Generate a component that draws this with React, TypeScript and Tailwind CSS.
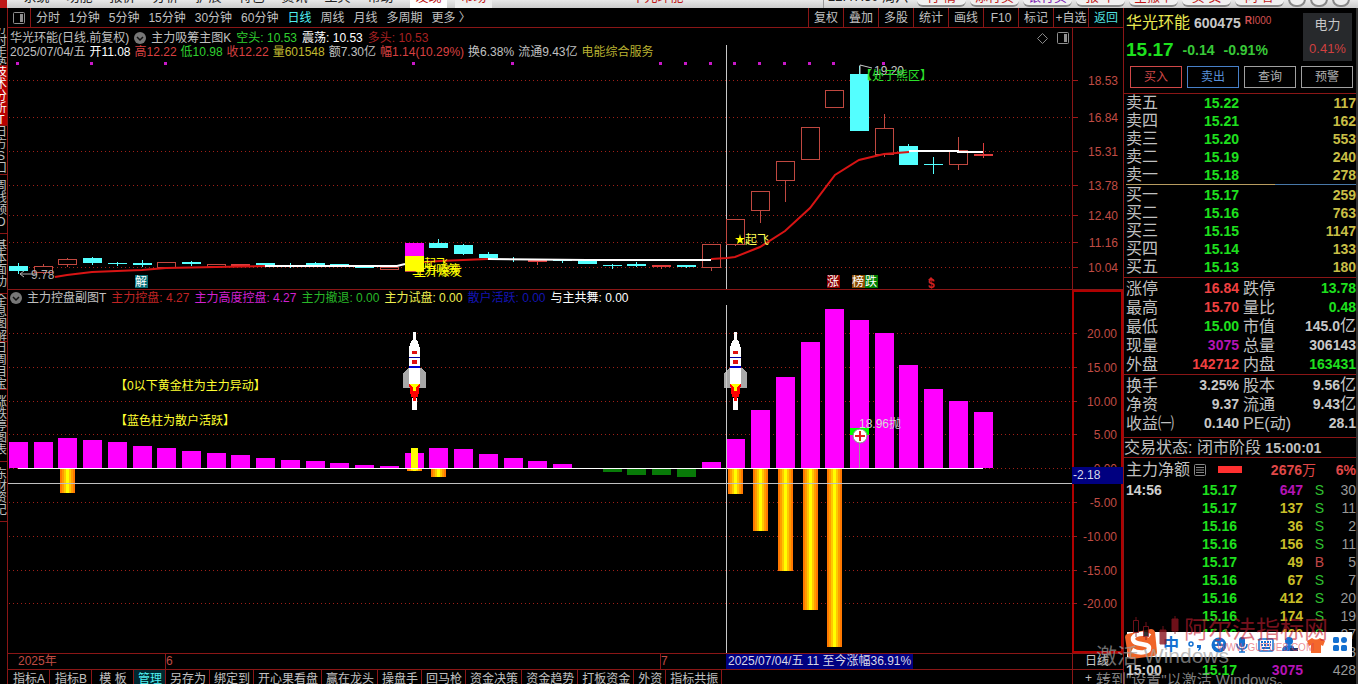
import { useState } from "react";
import clsx from "clsx";

type Candle = {
  body: [number, number];
  wick?: [number, number];
  kind: "up" | "down" | "flat";
};

const menus = ["系统", "功能", "报价", "分析", "扩展", "特色", "资讯", "工具", "帮助"];
const pills = ["行 情", "添行买", "银行买", "报 单", "全撤单", "买 卖", "问 答"];
const periods = ["分时", "1分钟", "5分钟", "15分钟", "30分钟", "60分钟", "日线", "周线", "月线", "多周期", "更多 〉"];
const tools = ["复权", "叠加", "多股", "统计", "画线", "F10", "标记", "+自选", "返回"];
const bottomTabs = [
  "指标A", "指标B", "模 板", "管理", "另存为", "绑定到", "开心果看盘", "赢在龙头",
  "操盘手", "回马枪", "资金决策", "资金趋势", "打板资金", "外资", "指标共振",
];
const sideTabs = [
  { label: "分时走势", height: "h-[38px]" },
  { label: "技术分析T", height: "h-[60px]" },
  { label: "日方S口", height: "h-[49px]" },
  { label: "周线预O", height: "h-[59px]" },
  { label: "基本面功", height: "h-[60px]" },
  { label: "全息图解", height: "h-[48px]" },
  { label: "日周目宝", height: "h-[48px]" },
  { label: "涨跌停图表", height: "h-[72px]" },
  { label: "东财资记", height: "h-[60px]" },
];

const asks = [
  ["卖五", "15.22", "117"],
  ["卖四", "15.21", "162"],
  ["卖三", "15.20", "553"],
  ["卖二", "15.19", "240"],
  ["卖一", "15.18", "278"],
];
const bids = [
  ["买一", "15.17", "259"],
  ["买二", "15.16", "763"],
  ["买三", "15.15", "1147"],
  ["买四", "15.14", "133"],
  ["买五", "15.13", "180"],
];

const RED = "text-[#f04040]";
const GREEN = "text-[#1ee01e]";
const GRAY = "text-[#c8c8c8]";
const PURPLE = "text-[#b414b4]";

const stats = [
  ["涨停", "16.84", RED, "跌停", "13.78", GREEN],
  ["最高", "15.70", RED, "量比", "0.48", GREEN],
  ["最低", "15.00", GREEN, "市值", "145.0亿", GRAY],
  ["现量", "3075", PURPLE, "总量", "306143", GRAY],
  ["外盘", "142712", RED, "内盘", "163431", GREEN],
];
const basics = [
  ["换手", "3.25%", GRAY, "股本", "9.56亿", GRAY],
  ["净资", "9.37", GRAY, "流通", "9.43亿", GRAY],
  ["收益㈠", "0.140", GRAY, "PE(动)", "28.1", GRAY],
];
const ticks = [
  ["14:56", "15.17", "647", "S", "30"],
  ["", "15.17", "137", "S", "11"],
  ["", "15.16", "36", "S", "2"],
  ["", "15.16", "156", "S", "11"],
  ["", "15.17", "49", "B", "5"],
  ["", "15.16", "67", "S", "7"],
  ["", "15.16", "412", "S", "20"],
  ["", "15.16", "174", "S", "19"],
  ["", "15.16", "460", "S", "27"],
  ["", "15.16", "85", "S", "8"],
  ["15:00", "15.17", "3075", "", "428"],
];

// y values are measured from the top of the price pane
const candles: Candle[] = [
  { body: [238, 243], wick: [235, 246], kind: "down" },
  { body: [238, 244], wick: [236, 246], kind: "up" },
  { body: [231, 236], wick: [230, 239], kind: "up" },
  { body: [230, 235], wick: [229, 237], kind: "down" },
  { body: [235, 236], wick: [234, 238], kind: "down" },
  { body: [235, 237], wick: [232, 239], kind: "down" },
  { body: [234, 239], kind: "up" },
  { body: [234, 236], wick: [233, 238], kind: "down" },
  { body: [236, 238], kind: "up" },
  { body: [236, 238], kind: "flat" },
  { body: [235, 237], kind: "down" },
  { body: [237, 238], wick: [235, 240], kind: "down" },
  { body: [235, 237], wick: [234, 239], kind: "down" },
  { body: [236, 237], kind: "down" },
  { body: [239, 240], kind: "down" },
  { body: [239, 241], kind: "up" },
  { body: [215, 243], kind: "up" },
  { body: [215, 220], wick: [211, 220], kind: "down" },
  { body: [217, 226], wick: [216, 227], kind: "down" },
  { body: [226, 230], wick: [224, 230], kind: "down" },
  { body: [231, 232], wick: [229, 234], kind: "down" },
  { body: [232, 234], wick: [232, 237], kind: "flat" },
  { body: [232, 233], wick: [232, 235], kind: "down" },
  { body: [232, 236], kind: "down" },
  { body: [237, 238], wick: [236, 241], kind: "down" },
  { body: [236, 238], wick: [234, 239], kind: "down" },
  { body: [237, 239], wick: [237, 241], kind: "flat" },
  { body: [237, 239], wick: [237, 240], kind: "down" },
  { body: [216, 239], wick: [239, 243], kind: "up" },
  { body: [191, 216], wick: [216, 218], kind: "up" },
  { body: [163, 182], wick: [182, 195], kind: "up" },
  { body: [133, 152], wick: [152, 174], kind: "up" },
  { body: [99, 131], kind: "up" },
  { body: [62, 79], kind: "up" },
  { body: [46, 103], wick: [38, 46], kind: "down" },
  { body: [100, 126], wick: [86, 129], kind: "up" },
  { body: [118, 137], wick: [116, 118], kind: "down" },
  { body: [136, 137], wick: [129, 146], kind: "down" },
  { body: [122, 136], wick: [109, 142], kind: "up" },
  { body: [126, 128], wick: [115, 130], kind: "flat" },
];

const signalDays = [0, 3, 6, 16, 20, 26, 27, 28, 29, 30, 31, 32, 33, 35];

// pixel heights above the zero line, negative ones hang below it
const control = [
  26, 26, 30, 28, 26, 22, 20, 17, 15, 13, 10, 8, 7, 5, 3, 2, 15, 20, 19, 14,
  10, 7, 4, 0, -4, -7, -7, -9, 6, 29, 58, 91, 126, 159, 148, 135, 103, 79, 67, 56,
];
const gold: [number, number][] = [
  [2, 25], [16, 3], [17, 9], [29, 26], [30, 63], [31, 103], [32, 142], [33, 179],
];

const priceAxis: [number, string][] = [
  [52, "18.53"], [89, "16.84"], [123, "15.31"], [157, "13.78"],
  [187, "12.40"], [214, "11.16"], [239, "10.04"],
];
const controlAxis: [number, string][] = [
  [43, "20.00"], [77, "15.00"], [111, "10.00"], [144, "5.00"], [178, "0.00"],
  [212, "-5.00"], [246, "-10.00"], [280, "-15.00"], [313, "-20.00"],
];

const ZERO = 178;
const dayX = (i: number) => Math.floor(10.33 + i * 24.74);

const GridLines = ({ rows }: { rows: number[] }) => (
  <>
    {rows.map((y) => (
      <line key={y} x1="1" x2="100%" y1={y + 0.5} y2={y + 0.5} stroke="#a02018" strokeDasharray="1 3" />
    ))}
  </>
);

const PanelIcon = () => (
  <svg width="14" height="12" viewBox="0 0 14 12" fill="none" aria-hidden="true">
    <rect x="1.5" y="0.5" width="11" height="11" rx="1" stroke="#909090" />
    <rect x="8" y="2" width="3" height="8" fill="#909090" />
  </svg>
);

const Chevron = () => (
  <svg width="12" height="12" viewBox="0 0 12 12" aria-hidden="true">
    <circle cx="6" cy="6" r="6" fill="#777" />
    <path d="M3 5l3 3 3-3" fill="none" stroke="#111" strokeWidth="1.5" />
  </svg>
);

const Badge = ({ x, fill, text }: { x: number; fill: string; text: string }) => (
  <g>
    <rect x={x} y="247" width="13" height="13" fill={fill} />
    <text x={x} y="258" fontSize="12" fill="#fff">{text}</text>
  </g>
);

const Rocket = ({ x }: { x: number }) => (
  <g transform={`translate(${x} 42)`} shapeRendering="crispEdges">
    <path d="M-6 36 -11 41V56H12V41L7 36z" fill="#a8a8a8" />
    <path d="M-1 0H2V7L4 10 6 16V52H-5V16L-3 10-1 7z" fill="#fff" />
    <rect x="-2" y="19" width="5" height="3" fill="#e01010" />
    <rect x="-5" y="25" width="11" height="1" fill="#0000a0" />
    <rect x="-2" y="28" width="5" height="4" fill="#e01010" />
    <rect x="-5" y="34" width="11" height="2" fill="#0000d0" />
    <rect x="-2" y="66" width="5" height="12" fill="#fff" />
    <path d="M-5 52H6L4 65H2V69H-1V65H-3z" fill="#f00" />
    <path d="M-4 52H5L2 56V59H-1V56z" fill="#ff0" />
  </g>
);

const PriceChart = () => (
  <svg className="block h-[261px] w-full" role="img" aria-label="日线">
    <GridLines rows={priceAxis.map(([y]) => y)} />
    <line x1="718.5" x2="718.5" y1="17" y2="261" stroke="#c8c8c8" />
    <g shapeRendering="crispEdges">
      {signalDays.map((d) => (
        <rect key={d} x={dayX(d) - 2} y="34" width="3" height="3" fill="#c818c8" />
      ))}
      {candles.map(({ body, wick, kind }, i) => {
        const x = dayX(i);
        const color = kind === "down" ? "#54ffff" : kind === "up" ? "#c04840" : "#e03c3c";
        return (
          <g key={i}>
            {wick && <rect x={x} y={wick[0]} width="1" height={wick[1] - wick[0]} fill={color} />}
            {kind === "up" ? (
              <rect x={x - 8.5} y={body[0] + 0.5} width="18" height={body[1] - body[0]} fill="#000" stroke={color} />
            ) : (
              <rect x={x - 9} y={body[0]} width="19" height={body[1] - body[0]} fill={color} />
            )}
          </g>
        );
      })}
      <rect x="397" y="215" width="19" height="13" fill="#f0f" />
      <rect x="397" y="228" width="19" height="15" fill="#ff0" />
    </g>
    <g fill="none" strokeWidth="2">
      <path d="M47 249 59 247 84 244 134 242 158 240 208 239 257 238M416 234 432 233 455 232 480 231M703 231 719 230 727 229 752 219 777 203 802 180 827 147 851 132 876 126 901 124" stroke="#d81414" />
      <path d="M257 238H389L397 236M480 231 579 232H703M901 123H950V124H975" stroke="#fff" />
    </g>
    <g fontSize="12">
      <path d="M29 246H12M12 246l4-3M12 246l4 3" stroke="#b0b0b0" fill="none" />
      <text x="23" y="251" fill="#b0b0b0">9.78</text>
      <text x="416" y="240" fill="#ff0">起飞</text>
      <text x="404" y="246" fill="#ff0">主力吸筹</text>
      <text x="406" y="248" fill="#ff0">主升爆发</text>
      <path d="M732 206 733 210H737L734 212 735 216 732 214 729 216 730 212 727 210H731z" fill="#ff0" />
      <text x="737" y="216" fill="#ff5">起飞</text>
      <path d="M852 46V37l12 3" stroke="#c8c8c8" fill="none" />
      <text x="866" y="47" fill="#c8c8c8">19.20</text>
      <text x="852" y="52" fill="#2be02b">【处于熊区】</text>
      <Badge x={127} fill="#08707a" text="解" />
      <Badge x={819} fill="#8a0000" text="涨" />
      <Badge x={844} fill="#8a4a00" text="榜" />
      <Badge x={857} fill="#008000" text="跌" />
      <text x="920" y="260" fill="#d02020" fontWeight="bold">$</text>
      <path d="M920 252l3-3 3 3z" fill="#d02020" />
    </g>
  </svg>
);

const ControlChart = () => (
  <svg className="block h-[363px] w-full" role="img" aria-label="主力控盘">
    <GridLines rows={controlAxis.map(([y]) => y)} />
    <g shapeRendering="crispEdges">
      {control.map((v, i) => (
        <rect
          key={i}
          x={dayX(i) - 9}
          y={v > 0 ? ZERO - v : ZERO}
          width="19"
          height={Math.abs(v)}
          fill={v > 0 ? "#f0f" : "#087a08"}
        />
      ))}
      {gold.map(([i, h]) => (
        <g key={i}>
          <rect x={dayX(i) - 7} y={ZERO} width="15" height={h} fill="#ff7800" />
          <rect x={dayX(i) - 5} y={ZERO} width="11" height={h} fill="#ff9c00" />
          <rect x={dayX(i) - 3} y={ZERO} width="7" height={h} fill="#ffc800" />
          <rect x={dayX(i) - 1} y={ZERO} width="3" height={h} fill="#ff0" />
        </g>
      ))}
      <rect x="403" y="158" width="7" height="22" fill="#ff0" />
      <rect x="10" y={ZERO} width="965" height="1" fill="#fff" />
      <rect x="0" y="193" width="100%" height="1" fill="#c0c0c0" />
      <rect x="842" y="138" width="19" height="7" fill="#0f0" />
      <rect x="851" y="150" width="1" height="28" fill="#999" />
    </g>
    <Rocket x={406} />
    <Rocket x={727} />
    <line x1="718.5" x2="718.5" y1="15" y2="363" stroke="#c8c8c8" />
    <circle cx="852" cy="146" r="7" fill="#fff" stroke="#888" />
    <path d="M847 146h10M852 141v10" stroke="#e02020" strokeWidth="2" />
    <g fontSize="12">
      <text x="851" y="138" fill="#d8d8d8">18.96抛</text>
      <text x="107" y="100" fill="#ffff30">【0以下黄金柱为主力异动】</text>
      <text x="107" y="135" fill="#ffff30">【蓝色柱为散户活跃】</text>
    </g>
  </svg>
);

const Axis = ({ rows, className }: { rows: [number, string][]; className: string }) => (
  <svg className={clsx("block w-full", className)} aria-hidden="true">
    {rows.map(([y, label]) => (
      <g key={label}>
        <line x1="0" x2="5" y1={y + 0.5} y2={y + 0.5} stroke="#a01818" />
        <text x="45" y={y + 5} fontSize="12" textAnchor="end" fill="#c04c44">{label}</text>
      </g>
    ))}
  </svg>
);

const Level = ({ row }: { row: string[] }) => (
  <tr className="h-[18px]">
    <th className="w-[50px] text-left font-normal text-base leading-[18px] text-[#c0c0c0]">{row[0]}</th>
    <td className={clsx("w-[63px] text-right", GREEN)}>{row[1]}</td>
    <td className="text-right text-[#c8be46]">{row[2]}</td>
  </tr>
);

const StatTable = ({ rows }: { rows: string[][] }) => (
  <table className="w-full table-fixed text-sm font-bold leading-[19px]">
    <tbody>
      {rows.map((r) => (
        <tr key={r[0]} className="h-[19px]">
          <th className="w-[52px] whitespace-nowrap text-left font-normal text-base leading-[19px] text-[#c0c0c0]">{r[0]}</th>
          <td className={clsx("w-[61px] text-right", r[2])}>{r[1]}</td>
          <th className="w-[50px] whitespace-nowrap pl-1 text-left font-normal text-base leading-[19px] text-[#c0c0c0]">{r[3]}</th>
          <td className={clsx("whitespace-nowrap text-right", r[5])}>
            {r[4].replace("亿", "")}
            {r[4].endsWith("亿") && <span className="text-base font-normal leading-none">亿</span>}
          </td>
        </tr>
      ))}
    </tbody>
  </table>
);

const ImeBar = () => (
  <div className="absolute left-[3px] top-[624px] flex h-[25px] w-[225px] items-center bg-white pl-9 pr-1 text-[#1470d0]">
    <svg className="absolute -left-1 -top-1 h-8 w-9" viewBox="0 0 36 32" aria-hidden="true">
      <path d="M4 6 28 1q3 0 4 3l2 20q0 3-3 4L9 31q-3 0-4-3L2 9q0-2 2-3z" fill="#f06428" />
      <path d="M27 8C21 4 10 6 10 11c0 7 16 3 16 9 0 5-10 6-17 2" fill="none" stroke="#fff" strokeWidth="4.5" />
    </svg>
    <div className="flex flex-1 items-center justify-between">
      <span className="text-base font-bold leading-6">中</span>
      <svg width="16" height="16" viewBox="0 0 16 16" fill="currentColor" aria-hidden="true">
        <circle cx="4" cy="7" r="2" fill="none" stroke="currentColor" strokeWidth="1.5" />
        <path d="M10 8h4v3q0 2-3 3v-1q1-1 1-2h-2z" />
      </svg>
      <svg width="16" height="16" viewBox="0 0 16 16" aria-hidden="true">
        <circle cx="8" cy="8" r="7.5" fill="currentColor" />
        <circle cx="5" cy="6" r="1.3" fill="#fff" />
        <circle cx="11" cy="6" r="1.3" fill="#fff" />
        <path d="M4 9q4 6 8 0z" fill="#fff" />
      </svg>
      <svg width="14" height="16" viewBox="0 0 14 16" aria-hidden="true">
        <rect x="4" y="0" width="6" height="10" rx="3" fill="currentColor" />
        <path d="M2 7q0 5 5 5t5-5M7 12v3M4 15h6" fill="none" stroke="currentColor" strokeWidth="1.5" />
      </svg>
      <svg width="16" height="14" viewBox="0 0 16 14" aria-hidden="true">
        <rect x="1" y="1" width="14" height="12" rx="1" fill="#fff" stroke="currentColor" strokeWidth="1.5" />
        <path d="M3 4h10M3 7h10" stroke="currentColor" strokeWidth="2" strokeDasharray="2 1" />
        <path d="M4 10h8" stroke="currentColor" strokeWidth="2" />
      </svg>
      <svg width="17" height="16" viewBox="0 0 17 16" aria-hidden="true">
        <circle cx="7" cy="4" r="4" fill="currentColor" />
        <path d="M0 14q0-6 7-6 4 0 5 2v4z" fill="currentColor" />
        <path d="M8 11h8v3H8z" fill="#203870" />
      </svg>
      <svg width="18" height="16" viewBox="0 0 18 16" aria-hidden="true">
        <path d="M5 1q4 3 8 0l5 3-2 5-2-1v8H4V8L2 9 0 4z" fill="#f4682c" />
      </svg>
      <svg width="15" height="15" viewBox="0 0 15 15" fill="currentColor" aria-hidden="true">
        <rect width="6" height="6" rx="1.5" />
        <rect x="8" width="6" height="6" rx="3" />
        <rect y="8" width="6" height="6" rx="1.5" />
        <rect x="8" y="8" width="6" height="6" rx="1.5" />
      </svg>
    </div>
  </div>
);

const QuotePanel = () => (
  <aside className="relative w-[235px] shrink-0 border-l border-r-2 border-l-[#8a1616] border-r-[#333]">
    <div className="flex h-[86px] flex-col border-b border-[#8a1616]">
      <div className="flex h-[55px] justify-between pl-[2px] pr-1 pt-[5px]">
        <div>
          <div className="flex h-5 items-center gap-1 whitespace-nowrap">
            <h1 className="text-base leading-5 text-[#e8e850]">华光环能</h1>
            <span className="text-sm font-bold text-[#c8c8c8]">600475</span>
            <span className="self-start text-[10px] leading-4 text-[#d05050]"><b>R</b>I000</span>
          </div>
          <div className="mt-[7px] flex items-center gap-[9px] text-sm font-bold leading-5 text-[#38c838]">
            <span className="text-[19px] text-[#1ee01e]">15.17</span>
            <span>-0.14</span>
            <span>-0.91%</span>
          </div>
        </div>
        <div className="flex h-12 w-[49px] flex-col items-center justify-around bg-[#27292c] text-[13px]">
          <span className={GRAY}>电力</span>
          <span className="text-[#d04040]">0.41%</span>
        </div>
      </div>
      <div className="mt-[3px] grid grid-cols-4 gap-[5px] pl-[6px] pr-[3px] text-xs">
        <button className="h-[22px] border border-[#d04848] text-[#d04848]">买入</button>
        <button className="h-[22px] border border-[#4880c8] text-[#5890d8]">卖出</button>
        <button className="h-[22px] border border-[#a0a0a0] text-[#b0b0b0]">查询</button>
        <button className="h-[22px] border border-[#a0a0a0] text-[#b0b0b0]">预警</button>
      </div>
    </div>

    <div className="pl-[2px] text-sm font-bold leading-[18px]">
      <table className="w-full table-fixed"><tbody>{asks.map((r) => <Level key={r[0]} row={r} />)}</tbody></table>
      <div className="flex h-px"><i className="flex-[150] bg-[#b89c60]" /><i className="flex-[82] bg-[#4878a8]" /></div>
      <table className="mt-px w-full table-fixed"><tbody>{bids.map((r) => <Level key={r[0]} row={r} />)}</tbody></table>
    </div>
    <div className="mt-px border-t border-[#8a1616] pl-[2px] pt-px"><StatTable rows={stats} /></div>
    <div className="border-t border-[#8a1616] pb-1 pl-[2px] pt-px"><StatTable rows={basics} /></div>
    <div className="h-5 whitespace-nowrap border-t border-[#8a1616] text-base leading-5 text-[#c0c0c0]">
      交易状态: 闭市阶段 <b className="text-sm">15:00:01</b>
    </div>
    <div className="flex h-6 items-center border-t border-[#8a1616] pl-[2px] text-sm font-bold text-[#e04848]">
      <span className="text-base font-normal text-[#c0c0c0]">主力净额</span>
      <svg className="ml-1" width="12" height="12" viewBox="0 0 12 12" aria-hidden="true">
        <rect x="0.5" y="0.5" width="11" height="11" rx="1" fill="none" stroke="#888" />
        <path d="M2 3.5h8M2 6h8M2 8.5h8" stroke="#888" />
      </svg>
      <i className="ml-3 h-[7px] w-6 bg-[#ff3030]" />
      <span className="flex-1 text-right">2676<span className="font-normal">万</span></span>
      <span className="w-10 text-right">6%</span>
    </div>
    <table className="w-full table-fixed text-sm font-bold leading-[18px]">
      <tbody>
        {ticks.map((t, i) => (
          <tr key={i} className="h-[18px]">
            <td className="w-[60px] pl-[2px] text-[#d0d0d0]">{t[0]}</td>
            <td className={clsx("w-[53px] text-right", GREEN)}>{t[1]}</td>
            <td className={clsx("w-[66px] text-right", Number(t[2]) > 500 ? PURPLE : "text-[#c8be28]")}>{t[2]}</td>
            <td className={clsx("w-[33px] text-center font-normal", t[3] === "B" ? "text-[#c04848]" : "text-[#30c030]")}>{t[3]}</td>
            <td className="text-right font-normal text-[#989898]">
              <span className="float-right">{t[4]}</span>
            </td>
          </tr>
        ))}
      </tbody>
    </table>

    <ImeBar />
    {/* Overlays */}
    <div className="pointer-events-none absolute left-[60px] top-[606px] whitespace-nowrap text-2xl leading-8 text-[#c81e32]/60">阿尔法指标网</div>
    <div className="pointer-events-none absolute left-[93px] top-[632px] text-[10px] leading-4 text-[#e04050]/60">WWW.GUZUE8.COM</div>
    <svg className="absolute left-2 top-[606px] h-8 w-12" viewBox="0 0 48 32" aria-hidden="true">
      <g fill="#8a1420" stroke="#8a1420" opacity="0.8">
        <path d="M4 3v20M14 8v18M31 12v18M43 2v18" />
        <path d="M1.5 6.5h5v12h-5zM11.5 12.5h5v10h-5z" fill="#000" />
        <path d="M28 16h6v14h-6zM40 5h6v12h-6z" />
      </g>
    </svg>
    <div className="pointer-events-none absolute -left-7 top-[636px] whitespace-nowrap text-[21px] leading-6 text-[#a0a0a0]/70">激活 Windows</div>
    <div className="pointer-events-none absolute -left-7 top-[662px] whitespace-nowrap text-[15px] leading-5 text-[#a0a0a0]/80">转到"设置"以激活 Windows。</div>
  </aside>
);

const App = () => {
  const [period, setPeriod] = useState("日线");
  const [tab, setTab] = useState("管理");

  return (
    <div className="flex h-screen w-full flex-col overflow-hidden bg-black font-['Liberation_Sans','Noto_Sans_CJK_SC',sans-serif] text-xs text-[#c0c0c0]">
      {/* Menu strip */}
      <header className="flex h-2 shrink-0 items-end overflow-hidden whitespace-nowrap bg-linear-to-b from-[#e8e8e8] to-[#cccccc] text-[13px] leading-[14px] text-[#222]">
        <i className="mr-2 h-2 w-[7px] bg-[#c01818]" />
        {menus.map((m) => <button key={m} className="w-[43px] pb-1">{m}</button>)}
        <button className="ml-2 w-[37px] bg-white pb-1 text-[#c01818]">发现</button>
        <button className="ml-2 w-[37px] bg-[#eee] pb-1 text-[#c01818]">市场</button>
        <span className="flex-1 pb-1 text-center text-[#c01818]">华光环能</span>
        <span className="w-[90px] border-l border-[#999] pb-1 pl-1">22:47:50 周六</span>
        <div className="ml-1 flex gap-1 pb-px">
          {pills.map((p, i) => (
            <button
              key={p}
              className={clsx("w-[49px] rounded-b-md border-b-2 border-[#888] bg-[#f0f0f0] pb-px", i === 2 ? "text-[#7a18b0]" : "text-[#c01818]")}
            >
              {p}
            </button>
          ))}
        </div>
        <div className="ml-1 mr-2 flex gap-1 pb-px">
          <i className="h-4 w-[18px] rounded-full border-2 border-[#888] bg-[#eee]" />
          <i className="h-4 w-[18px] rounded-full border-2 border-[#888] bg-[#eee]" />
          <i className="h-4 w-[18px] rounded-full border-2 border-[#888] bg-[#eee]" />
        </div>
      </header>

      <div className="flex min-h-0 flex-1">
        {/* Side tabs */}
        <nav className="flex w-2 shrink-0 flex-col overflow-hidden border-r border-[#8a1616] pt-5">
          {sideTabs.map((s, i) => (
            <button
              key={s.label}
              className={clsx("flex shrink-0 items-center justify-end overflow-hidden border-b border-[#8a1616] leading-3", s.height, i === 1 && "bg-[#b80000] text-white")}
            >
              <span className="w-3 shrink-0 break-all">{s.label}</span>
            </button>
          ))}
        </nav>

        <main className="flex min-w-0 flex-1 flex-col">
          {/* Toolbar */}
          <div className="flex h-5 shrink-0 items-stretch justify-between overflow-hidden whitespace-nowrap border-b border-[#8a1616]">
            <div className="flex items-stretch">
              <span className="flex w-[23px] items-center justify-center border-r border-[#8a1616]"><PanelIcon /></span>
              {periods.map((p) => (
                <button key={p} onClick={() => setPeriod(p)} className={clsx("pl-[5px] pr-1", period === p && "text-[#50f0f0]")}>{p}</button>
              ))}
            </div>
            <div className="flex">
              {tools.map((t) => (
                <button key={t} className={clsx("w-[35px] border-l border-[#8a1616]", t === "返回" && "text-[#50e0e0]")}>{t}</button>
              ))}
            </div>
          </div>

          {/* Price pane */}
          <section className="grid shrink-0 grid-cols-[minmax(0,1fr)_51px] border-b border-[#8a1616]">
            <div className="grid h-[261px] grid-cols-1">
              <div className="[grid-area:1/1]"><PriceChart /></div>
              <div className="z-10 whitespace-nowrap pl-[2px] pt-[3px] leading-[14px] [grid-area:1/1]">
                <div className="flex h-[14px] items-center gap-[5px]">
                  <span>华光环能(日线.前复权)</span>
                  <Chevron />
                  <span>主力吸筹主图K</span>
                  <span className="text-[#30d030]">空头: 10.53</span>
                  <span className="text-white">震荡: 10.53</span>
                  <span className="text-[#a82020]">多头: 10.53</span>
                  <span className="ml-auto flex items-center gap-2 pr-[2px]">
                    <svg width="11" height="11" viewBox="0 0 11 11" aria-hidden="true"><path d="M5.5.5l5 5-5 5-5-5z" fill="none" stroke="#888" /></svg>
                    <PanelIcon />
                  </span>
                </div>
                <div className="flex h-[14px] items-center gap-1">
                  <span>2025/07/04/五</span>
                  <span className="text-white">开11.08</span>
                  <span className="text-[#d84040]">高12.22</span>
                  <span className="text-[#30d030]">低10.98</span>
                  <span className="text-[#d84040]">收12.22</span>
                  <span className="text-[#c0b830]">量601548</span>
                  <span>额7.30亿</span>
                  <span className="text-[#d84040]">幅1.14(10.29%)</span>
                  <span>换6.38%</span>
                  <span>流通9.43亿</span>
                  <span className="text-[#b8b030]">电能综合服务</span>
                </div>
              </div>
            </div>
            <div className="border-l border-[#8a1616]"><Axis rows={priceAxis} className="h-[261px]" /></div>
          </section>

          {/* Indicator pane */}
          <section className="grid shrink-0 grid-cols-[minmax(0,1fr)_51px]">
            <div className="grid h-[363px] grid-cols-1 overflow-hidden">
              <div className="[grid-area:1/1]"><ControlChart /></div>
              <div className="z-10 flex h-4 items-center gap-[5px] whitespace-nowrap pl-[2px] leading-4 [grid-area:1/1]">
                <Chevron />
                <span>主力控盘副图T</span>
                <span className="text-[#c02424]">主力控盘: 4.27</span>
                <span className="text-[#d020d0]">主力高度控盘: 4.27</span>
                <span className="text-[#28b828]">主力撤退: 0.00</span>
                <span className="text-[#f0f050]">主力试盘: 0.00</span>
                <span className="text-[#1414b0]">散户活跃: 0.00</span>
                <span className="text-white">与主共舞: 0.00</span>
              </div>
            </div>
            <div className="relative ring-2 ring-inset ring-[#b00000]">
              <Axis rows={controlAxis} className="h-[363px]" />
              <span className="absolute inset-x-0 top-[177px] h-[17px] bg-[#000080] pl-px leading-4 text-[#d8d8e8]">-2.18</span>
            </div>
          </section>

          {/* Date axis */}
          <div className="grid h-[17px] shrink-0 grid-cols-[minmax(0,1fr)_51px] border-y border-[#8a1616] leading-[15px] text-[#c04c44]">
            <div className="flex whitespace-nowrap">
              <span className="w-[157px] pl-[10px]">2025年</span>
              <span className="w-[495px] border-l border-[#8a1616]">6</span>
              <span className="w-[66px] border-l border-[#8a1616]">7</span>
              <span className="bg-[#000080] px-[2px] text-[#d8d8e8]">2025/07/04/五 11 至今涨幅36.91%</span>
            </div>
            <span className="border-l border-[#8a1616] pl-3 text-[#c8c8c8]">日线</span>
          </div>

          {/* Template tabs */}
          <div className="flex h-5 shrink-0 whitespace-nowrap">
            {bottomTabs.map((t, i) => (
              <button
                key={t}
                onClick={() => setTab(t)}
                className={clsx("border-r border-[#8a1616] pb-[3px] pl-1 pr-[3px] leading-4", i < 3 && "w-[42px]", tab === t && "bg-[#002830] text-[#50f0f0]")}
              >
                {t}
              </button>
            ))}
            <span className="ml-auto w-[51px] border-l border-[#8a1616] pl-3 leading-4">+ &nbsp; −</span>
          </div>
        </main>

        <QuotePanel />
      </div>
    </div>
  );
};

export default App;
